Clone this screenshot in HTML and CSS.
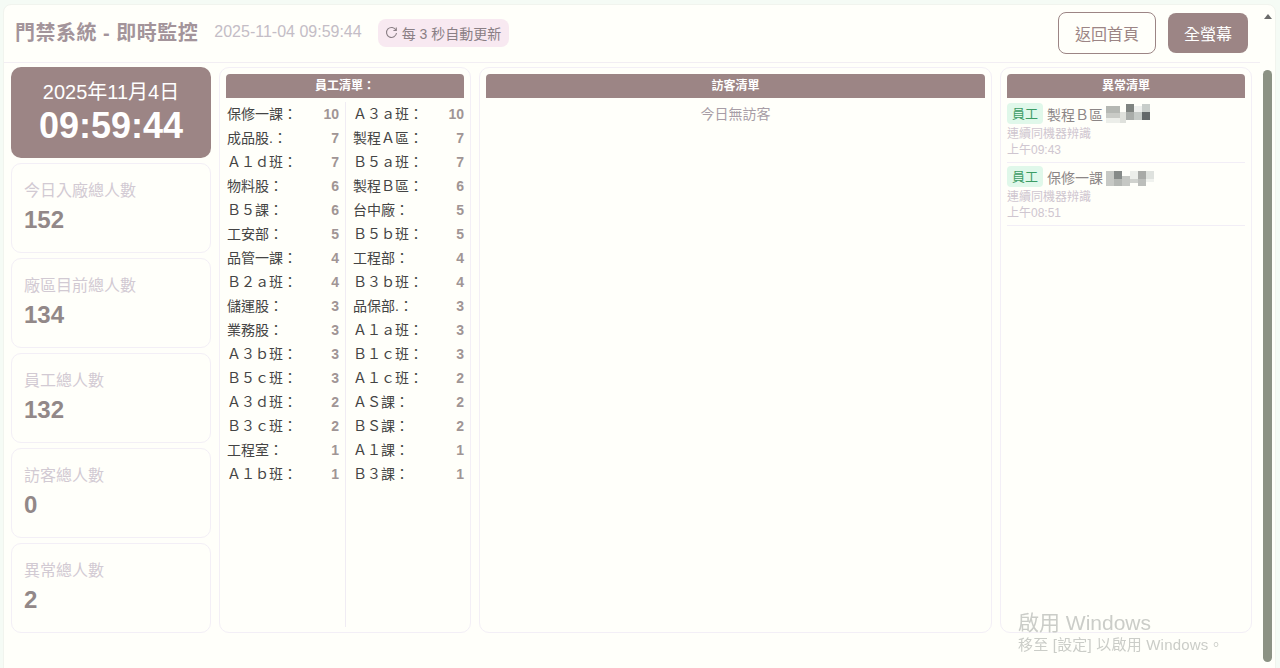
FILE: index.html
```html
<!DOCTYPE html>
<html lang="zh-Hant">
<head>
<meta charset="UTF-8" />
<title>門禁系統 - 即時監控</title>
<link rel="stylesheet" href="styles.css">
</head>
<body>

<div class="window">
  <div class="main">
    <header class="topbar">
      <h1>門禁系統 - 即時監控</h1>
      <span class="now">2025-11-04 09:59:44</span>
      <span class="refresh">
        <svg width="13" height="13" viewBox="0 0 13 13" fill="none" stroke="#8a7f85" stroke-width="1.1"><path d="M11 4.2A5 5 0 1 0 11.5 7"/><path d="M11.3 1.6v2.9H8.4"/></svg>
        每 3 秒自動更新
      </span>
      <div class="actions">
        <a class="btn btn-outline">返回首頁</a>
        <a class="btn btn-fill">全螢幕</a>
      </div>
    </header>

    <div class="board">
      <div class="stats">
        <div class="clock">
          <div class="clock-date">2025年11月4日</div>
          <div class="clock-time">09:59:44</div>
        </div>
        <div class="stat"><div class="stat-label">今日入廠總人數</div><div class="stat-value">152</div></div>
        <div class="stat"><div class="stat-label">廠區目前總人數</div><div class="stat-value">134</div></div>
        <div class="stat"><div class="stat-label">員工總人數</div><div class="stat-value">132</div></div>
        <div class="stat"><div class="stat-label">訪客總人數</div><div class="stat-value">0</div></div>
        <div class="stat"><div class="stat-label">異常總人數</div><div class="stat-value">2</div></div>
      </div>

      <section class="panel panel-staff">
        <h2>員工清單：</h2>
        <div class="staff-cols">
          <ul class="staff-col">
            <li><span>保修一課：</span><b>10</b></li>
            <li><span>成品股.：</span><b>7</b></li>
            <li><span>Ａ１ｄ班：</span><b>7</b></li>
            <li><span>物料股：</span><b>6</b></li>
            <li><span>Ｂ５課：</span><b>6</b></li>
            <li><span>工安部：</span><b>5</b></li>
            <li><span>品管一課：</span><b>4</b></li>
            <li><span>Ｂ２ａ班：</span><b>4</b></li>
            <li><span>儲運股：</span><b>3</b></li>
            <li><span>業務股：</span><b>3</b></li>
            <li><span>Ａ３ｂ班：</span><b>3</b></li>
            <li><span>Ｂ５ｃ班：</span><b>3</b></li>
            <li><span>Ａ３ｄ班：</span><b>2</b></li>
            <li><span>Ｂ３ｃ班：</span><b>2</b></li>
            <li><span>工程室：</span><b>1</b></li>
            <li><span>Ａ１ｂ班：</span><b>1</b></li>
          </ul>
          <ul class="staff-col">
            <li><span>Ａ３ａ班：</span><b>10</b></li>
            <li><span>製程Ａ區：</span><b>7</b></li>
            <li><span>Ｂ５ａ班：</span><b>7</b></li>
            <li><span>製程Ｂ區：</span><b>6</b></li>
            <li><span>台中廠：</span><b>5</b></li>
            <li><span>Ｂ５ｂ班：</span><b>5</b></li>
            <li><span>工程部：</span><b>4</b></li>
            <li><span>Ｂ３ｂ班：</span><b>4</b></li>
            <li><span>品保部.：</span><b>3</b></li>
            <li><span>Ａ１ａ班：</span><b>3</b></li>
            <li><span>Ｂ１ｃ班：</span><b>3</b></li>
            <li><span>Ａ１ｃ班：</span><b>2</b></li>
            <li><span>ＡＳ課：</span><b>2</b></li>
            <li><span>ＢＳ課：</span><b>2</b></li>
            <li><span>Ａ１課：</span><b>1</b></li>
            <li><span>Ｂ３課：</span><b>1</b></li>
          </ul>
        </div>
      </section>

      <section class="panel panel-visitor">
        <h2>訪客清單</h2>
        <p class="empty">今日無訪客</p>
      </section>

      <section class="panel panel-alert">
        <h2>異常清單</h2>
        <div class="alert-list">
          <div class="alert">
            <div class="alert-head">
              <span class="tag">員工</span>
              <span class="alert-name">製程Ｂ區</span>
              <svg class="mosaic" width="44" height="19" viewBox="0 0 44 19">
                <rect x="0" y="2" width="14" height="7" fill="#b5b8b3"/><rect x="0" y="9" width="14" height="5" fill="#c9cbc6"/><rect x="0" y="14" width="14" height="5" fill="#eceee9"/>
                <rect x="14" y="8" width="6" height="11" fill="#dfe1dc"/><rect x="20" y="0" width="8" height="8" fill="#7f8481"/><rect x="20" y="8" width="8" height="8" fill="#a9adaa"/>
                <rect x="28" y="8" width="8" height="8" fill="#c5cac7"/><rect x="28" y="2" width="8" height="6" fill="#eef0ee"/><rect x="36" y="0" width="8" height="8" fill="#c8cdca"/><rect x="36" y="8" width="8" height="8" fill="#63686a"/>
              </svg>
            </div>
            <div class="alert-note">連續同機器辨識</div>
            <div class="alert-note">上午09:43</div>
          </div>
          <div class="alert">
            <div class="alert-head">
              <span class="tag">員工</span>
              <span class="alert-name">保修一課</span>
              <svg class="mosaic" width="48" height="18" viewBox="0 0 48 18">
                <rect x="0" y="3" width="8" height="15" fill="#c7c9c5"/><rect x="8" y="3" width="8" height="8" fill="#868a88"/><rect x="8" y="11" width="8" height="7" fill="#b4b7b3"/>
                <rect x="16" y="8" width="8" height="10" fill="#c6c8c4"/><rect x="24" y="3" width="8" height="8" fill="#eceeea"/><rect x="24" y="11" width="8" height="4" fill="#d0d2ce"/>
                <rect x="32" y="3" width="8" height="8" fill="#a8aaa7"/><rect x="32" y="11" width="8" height="7" fill="#bcbebb"/><rect x="40" y="3" width="8" height="8" fill="#dfe2de"/><rect x="40" y="11" width="8" height="3" fill="#f0f2ee"/>
              </svg>
            </div>
            <div class="alert-note">連續同機器辨識</div>
            <div class="alert-note">上午08:51</div>
          </div>
        </div>
      </section>
    </div>
  </div>

  <div class="rail">
    <div class="rail-arrow"></div>
    <div class="rail-thumb"></div>
  </div>
</div>

<div class="watermark">
  <div class="watermark-title">啟用 Windows</div>
  <div class="watermark-sub">移至 [設定] 以啟用 Windows。</div>
</div>

</body>
</html>
```

FILE: styles.css
```css
/* Base */
html, body {
  height: 100%;
  overflow: hidden;
}
body {
  margin: 0;
  padding: 4px 4px 0 3px;
  box-sizing: border-box;
  background: #f5fbf5;
  color: #444;
  font-family: "Liberation Sans", "Noto Sans CJK TC", sans-serif;
}
h1, h2, p, ul {
  margin: 0;
  padding: 0;
}
ul {
  list-style: none;
}

/* Window */
.window {
  display: flex;
  height: 680px;
  background: #fffffa;
  border: 1px solid #f1f4ee;
  border-radius: 8px 8px 0 0;
}
.main {
  width: 1256px;
}

/* Top bar */
.topbar {
  display: flex;
  align-items: center;
  box-sizing: border-box;
  height: 58px;
  padding: 0 12px 2px 11px;
  border-bottom: 1px solid #f2eef3;
}
.topbar h1 {
  margin-top: -2px;
  font-size: 20px;
  font-weight: 700;
  letter-spacing: 0.5px;
  color: #a3949a;
}
.now {
  margin-top: -2px;
  margin-left: 16px;
  font-size: 16px;
  color: #c4bdc6;
}
.refresh {
  display: flex;
  align-items: center;
  gap: 4px;
  height: 28px;
  margin-left: 16px;
  padding: 0 8px 0 7px;
  border-radius: 8px;
  background: #f8e9f1;
  font-size: 14px;
  color: #8a7f85;
}
.actions {
  display: flex;
  align-items: center;
  gap: 12px;
  margin-left: auto;
}
.btn {
  display: flex;
  align-items: center;
  justify-content: center;
  box-sizing: border-box;
  border-radius: 8px;
  font-size: 16px;
}
.btn-outline {
  width: 98px;
  height: 42px;
  border: 1px solid #9c8585;
  color: #9c8585;
}
.btn-fill {
  width: 80px;
  height: 40px;
  background: #9c8585;
  color: #fff;
}

/* Board */
.board {
  display: flex;
  gap: 8px;
  height: 566px;
  margin-top: 4px;
  padding: 0 7px;
}
.stats {
  display: flex;
  flex-direction: column;
  gap: 5px;
  width: 200px;
  flex: none;
}
.clock {
  height: 91px;
  border-radius: 10px;
  background: #9c8585;
  color: #fff;
  text-align: center;
}
.clock-date {
  margin-top: 12px;
  font-size: 20px;
  line-height: 26px;
}
.clock-time {
  font-size: 36px;
  font-weight: 700;
  line-height: 42px;
}
.stat {
  flex: 1;
  box-sizing: border-box;
  padding: 15px 12px;
  border: 1px solid #f3eff6;
  border-radius: 10px;
}
.stat-label {
  font-size: 16px;
  line-height: 24px;
  color: #d2cad3;
}
.stat-value {
  margin-top: 2px;
  font-size: 24px;
  font-weight: 700;
  line-height: 30px;
  color: #928888;
}

/* Panels */
.panel {
  box-sizing: border-box;
  padding: 6px;
  border: 1px solid #f3eff6;
  border-radius: 10px;
}
.panel h2 {
  height: 24px;
  border-radius: 4px 4px 0 0;
  background: #9c8585;
  font-size: 12px;
  font-weight: 700;
  line-height: 24px;
  text-align: center;
  color: #fff;
}
.panel-staff,
.panel-alert {
  width: 252px;
  flex: none;
}
.panel-visitor {
  width: 513px;
  flex: none;
}
.empty {
  margin-top: 4px;
  font-size: 14px;
  line-height: 24px;
  text-align: center;
  color: #a79da6;
}

/* Staff list */
.staff-cols {
  display: flex;
  height: 525px;
  margin-top: 4px;
}
.staff-col {
  width: 119px;
  box-sizing: border-box;
  padding-right: 6px;
  padding-left: 1px;
}
.staff-col + .staff-col {
  padding-left: 7px;
  padding-right: 0;
  border-left: 1px solid #f0ecf3;
}
.staff-col li {
  display: flex;
  justify-content: space-between;
  height: 24px;
  font-size: 14px;
  line-height: 24px;
  color: #444;
}
.staff-col b {
  font-size: 14px;
  color: #a09595;
}

/* Alerts */
.alert-list {
  display: flex;
  flex-direction: column;
  gap: 3px;
  margin-top: 5px;
}
.alert {
  box-sizing: border-box;
  height: 60px;
  border-bottom: 1px solid #f2eef6;
}
.alert-head {
  display: flex;
  align-items: center;
  height: 21px;
  margin-bottom: 2px;
}
.tag {
  width: 36px;
  height: 21px;
  border-radius: 4px;
  background: #e0f8ea;
  font-size: 13px;
  line-height: 21px;
  text-align: center;
  color: #3c9c64;
}
.alert-name {
  margin-left: 4px;
  font-size: 14px;
  color: #8c8686;
}
.mosaic {
  margin-left: 3px;
}
.alert-note {
  font-size: 12px;
  line-height: 16px;
  color: #cfc6d0;
}

/* Scrollbar */
.rail {
  flex: 1;
}
.rail-arrow {
  width: 0;
  margin: 9px auto 0;
  border: 4px solid transparent;
  border-top: 0;
  border-bottom: 5px solid #6b6b6b;
}
.rail-thumb {
  width: 9px;
  height: 592px;
  margin: 51px auto 0;
  border-radius: 5px;
  background: #8c9284;
}

/* Activation notice lies over the page */
.watermark {
  position: fixed;
  left: 1018px;
  top: 609px;
  color: #cbcdc8;
}
.watermark-title {
  font-size: 21px;
  line-height: 27px;
}
.watermark-sub {
  font-size: 15px;
  line-height: 18px;
  letter-spacing: 0.2px;
}
```
